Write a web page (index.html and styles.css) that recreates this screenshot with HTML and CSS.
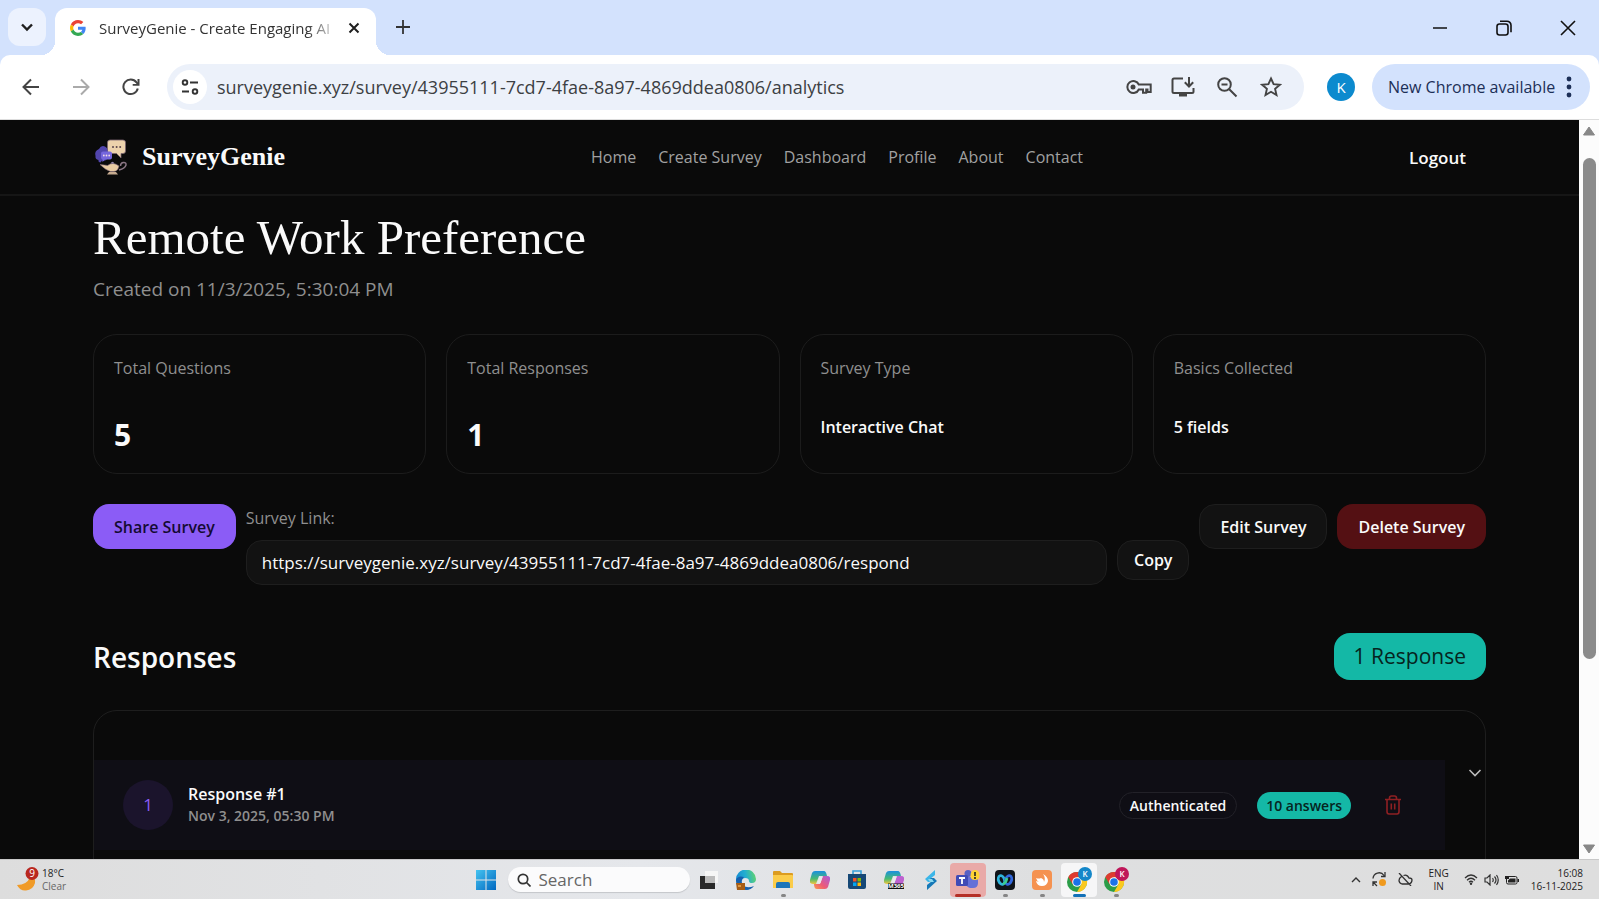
FILE: index.html
```html
<!DOCTYPE html>
<html lang="en">
<head>
<meta charset="utf-8">
<title>SurveyGenie - Create Engaging AI Surveys</title>
<link rel="stylesheet" href="styles.css">
</head>
<body>
<div class="tabstrip">
  <button class="tab-search" aria-label="Search tabs"><svg width="14" height="14" viewBox="0 0 14 14"><path d="M2 4.500l5 5 5-5" fill="none" stroke="#1f1f1f" stroke-width="2.400"/></svg></button>
  <div class="tab">
    <svg class="tab-favicon" width="16" height="16" viewBox="0 0 48 48"><path fill="#ea4335" d="M24 9.500c3.500 0 6.700 1.200 9.200 3.600l6.900-6.900C35.900 2.400 30.500 0 24 0 14.600 0 6.500 5.400 2.600 13.200l8 6.200C12.400 13.700 17.700 9.500 24 9.500z"/><path fill="#4285f4" d="M47 24.600c0-1.600-.2-3.100-.4-4.600H24v9h12.900c-.6 3-2.200 5.500-4.700 7.200l7.700 6C44.400 38 47 31.800 47 24.600z"/><path fill="#fbbc05" d="M10.500 28.600c-.5-1.500-.8-3-.8-4.600s.3-3.100.8-4.600l-8-6.200C.9 16.500 0 20.100 0 24s.9 7.500 2.600 10.800z"/><path fill="#34a853" d="M24 48c6.500 0 11.900-2.100 15.900-5.800l-7.700-6c-2.200 1.500-4.900 2.300-8.200 2.300-6.300 0-11.600-4.200-13.500-9.900l-8 6.200C6.500 42.600 14.600 48 24 48z"/></svg>
    <span class="tab-title">SurveyGenie - Create Engaging AI</span>
    <button class="icon-btn tab-close" aria-label="Close tab"><svg width="12" height="12" viewBox="0 0 12 12"><path d="M1.500 1.500l9 9m0-9l-9 9" stroke="#1f1f1f" stroke-width="2"/></svg></button>
  </div>
  <button class="icon-btn new-tab" aria-label="New tab"><svg width="14" height="14" viewBox="0 0 14 14"><path d="M7 0v14M0 7h14" stroke="#333" stroke-width="1.800"/></svg></button>
  <div class="window-controls">
    <button class="icon-btn" aria-label="Minimize"><svg width="16" height="16" viewBox="0 0 16 16"><path d="M1 8h14" stroke="#111" stroke-width="1.500"/></svg></button>
    <button class="icon-btn" aria-label="Restore"><svg width="16" height="16" viewBox="0 0 16 16"><g fill="none" stroke="#111" stroke-width="1.600"><rect x="1" y="4" width="11" height="11" rx="2.500"/><path d="M4 1.200h7a4 4 0 0 1 4 4v7"/></g></svg></button>
    <button class="icon-btn" aria-label="Close"><svg width="16" height="16" viewBox="0 0 16 16"><path d="M1 1l14 14M15 1L1 15" stroke="#111" stroke-width="1.600"/></svg></button>
  </div>
</div>

<div class="toolbar">
  <div class="nav-buttons">
    <button class="icon-btn" aria-label="Back"><svg width="18" height="18" viewBox="0 0 18 18"><path d="M17 9H2M9 1.500L1.500 9 9 16.500" fill="none" stroke="#444" stroke-width="2"/></svg></button>
    <button class="icon-btn" aria-label="Forward"><svg width="18" height="18" viewBox="0 0 18 18"><path d="M1 9h15M9 1.500L16.500 9 9 16.500" fill="none" stroke="#aaa" stroke-width="2"/></svg></button>
    <button class="icon-btn" aria-label="Reload"><svg width="18" height="18" viewBox="0 0 18 18"><path d="M15.800 10.500A7.300 7.300 0 1 1 14.500 4.300L16 6" fill="none" stroke="#444" stroke-width="2"/><path d="M17.500 1v6.800h-6.800V6h4.800V1z" fill="#444"/></svg></button>
  </div>
  <div class="omnibox">
    <button class="site-info" aria-label="Site information"><svg width="18" height="18" viewBox="0 0 18 18"><g fill="none" stroke="#333" stroke-width="1.900"><circle cx="4" cy="4.500" r="2.300"/><path d="M9 4.500h8M1 13.500h7"/><circle cx="14" cy="13.500" r="2.300"/></g></svg></button>
    <input class="address" type="text" aria-label="Address" value="surveygenie.xyz/survey/43955111-7cd7-4fae-8a97-4869ddea0806/analytics">
    <div class="omni-actions">
      <button class="icon-btn" aria-label="Passwords"><svg width="26" height="16" viewBox="0 0 26 16"><g fill="none" stroke="#444" stroke-width="2"><path d="M12.800 5.500A6 6 0 1 0 12.800 10.500H17V13.800h3.200V10.500H21.500V13h3.200V5.500z"/></g><circle cx="7" cy="8" r="2.500" fill="#444"/></svg></button>
      <button class="icon-btn" aria-label="Install app"><svg width="24" height="22" viewBox="0 0 24 22"><path d="M12 2.500H3q-1.500 0-1.500 1.500v11.500Q1.500 17 3 17h18q1.500 0 1.500-1.500V12M18 1v9M13.800 6.300L18 10.500l4.200-4.200" fill="none" stroke="#444" stroke-width="2"/><path d="M8 17h8v3.500H8z" fill="#444"/></svg></button>
      <button class="icon-btn" aria-label="Zoom"><svg width="22" height="22" viewBox="0 0 22 22"><g fill="none" stroke="#444" stroke-width="2"><circle cx="8.500" cy="8.500" r="6.300"/><path d="M13 13l7.500 7.500M5.500 8.500h6"/></g></svg></button>
      <button class="icon-btn" aria-label="Bookmark"><svg width="22" height="22" viewBox="0 0 22 22"><path d="M11 2.500l2.600 5.700 6.200.6-4.700 4.100 1.400 6.100L11 15.800 5.500 19l1.400-6.100-4.700-4.100 6.200-.6z" fill="none" stroke="#444" stroke-width="1.900"/></svg></button>
    </div>
  </div>
  <button class="avatar" aria-label="Profile">K</button>
  <button class="update">New Chrome available <svg width="6" height="22" viewBox="0 0 6 22"><g fill="#1c2f57"><circle cx="3" cy="3" r="2.400"/><circle cx="3" cy="11" r="2.400"/><circle cx="3" cy="19" r="2.400"/></g></svg></button>
</div>

<div class="viewport">
  <div class="page">
    <header class="site-header">
      <a class="brand" href="#">
        <svg width="35" height="36" viewBox="0 0 35 36"><path d="M17 1h13q2.500 0 2.500 2.500v8.500q0 2.500-2.500 2.500h-2v4.500l-4.500-4.500H17q-2.500 0-2.500-2.500V3.500Q14.500 1 17 1z" fill="#ecd2ac" stroke="#7a6370" stroke-width=".8"/><g fill="#59454c"><circle cx="20" cy="8" r="1"/><circle cx="23.600" cy="8" r="1"/><circle cx="27.200" cy="8" r="1"/></g><path d="M6 10q2-4 6-2.500 2.500 1 2.500 4v8q-2 3-5.500 2l-1.500 2q-2.500-.5-2-2.500Q2 20.500 2.500 17 1 12 6 10z" fill="#5145ad"/><path d="M10 12.500h7q2 0 2 2v4q0 2-2 2h-5l-2.500 2.500v-2.500q-1.500-.5-1.500-2v-4q0-2 2-2z" fill="#7566dc"/><g fill="#f1d9e6"><circle cx="10.800" cy="16.500" r=".9"/><circle cx="13.500" cy="16.500" r=".9"/><circle cx="16.200" cy="16.500" r=".9"/></g><path d="M7 25.500q5 .5 7.500 1Q17 24.500 20 24.500t6 2.500q-1 5-5 5.500h-3.500Q12.500 31 7 25.500z" fill="#e8cba2" stroke="#806779" stroke-width=".6"/><path d="M26 31q6-1.500 7-5 .3-2.700-2.500-2.500-3 .2-3 3.500" fill="none" stroke="#8a7584" stroke-width="1.500"/><path d="M17.500 24.500q2-3.500 4 0z" fill="#9184a8"/><path d="M16 33h7l2 2.500H14z" fill="#c7ab90"/></svg>
        <span>SurveyGenie</span>
      </a>
      <nav class="site-nav">
        <a href="#">Home</a><a href="#">Create Survey</a><a href="#">Dashboard</a><a href="#">Profile</a><a href="#">About</a><a href="#">Contact</a>
      </nav>
      <button class="logout">Logout</button>
    </header>
    <main class="content">
      <h1 class="title">Remote Work Preference</h1>
      <p class="created">Created on 11/3/2025, 5:30:04 PM</p>
      <section class="stats">
        <div class="stat"><span class="stat-label">Total Questions</span><strong class="stat-number">5</strong></div>
        <div class="stat"><span class="stat-label">Total Responses</span><strong class="stat-number">1</strong></div>
        <div class="stat"><span class="stat-label">Survey Type</span><strong class="stat-text">Interactive Chat</strong></div>
        <div class="stat"><span class="stat-label">Basics Collected</span><strong class="stat-text">5 fields</strong></div>
      </section>
      <section class="actions">
        <button class="btn btn-primary">Share Survey</button>
        <div class="share-link">
          <label class="link-label" for="survey-link">Survey Link:</label>
          <div class="link-row">
            <input class="link-input" id="survey-link" type="text" readonly value="https://surveygenie.xyz/survey/43955111-7cd7-4fae-8a97-4869ddea0806/respond">
            <button class="btn btn-dark btn-copy">Copy</button>
          </div>
        </div>
        <button class="btn btn-dark">Edit Survey</button>
        <button class="btn btn-danger">Delete Survey</button>
      </section>
      <div class="responses-head">
        <h2 class="section-title">Responses</h2>
        <span class="count">1 Response</span>
      </div>
      <section class="responses">
        <div class="response">
          <div class="response-main">
            <span class="index">1</span>
            <div class="who"><span class="name">Response #1</span><span class="date">Nov 3, 2025, 05:30 PM</span></div>
            <span class="badge badge-outline">Authenticated</span>
            <span class="badge badge-teal">10 answers</span>
            <button class="icon-btn trash" aria-label="Delete response"><svg width="16" height="20" viewBox="0 0 16 20"><path d="M0 4.500h16M2 4.500v12Q2 19 4 19h8q2 0 2-2.500v-12M4.500 4.500V3q0-2 2-2h3q2 0 2 2v1.500M6.300 8.500v6M9.700 8.500v6" fill="none" stroke="#8f2023" stroke-width="1.600"/></svg></button>
          </div>
          <button class="icon-btn expand" aria-label="Expand response"><svg width="14" height="10" viewBox="0 0 14 10"><path d="M1.500 2L7 7.500 12.500 2" fill="none" stroke="#bbb" stroke-width="1.600"/></svg></button>
        </div>
      </section>
    </main>
  </div>
  <div class="scrollbar">
    <svg width="14" height="10" viewBox="0 0 14 10"><path d="M7 1l5.500 8h-11z" fill="#888" stroke="#888" stroke-linejoin="round"/></svg>
    <div class="track"><div class="thumb"></div></div>
    <svg width="14" height="10" viewBox="0 0 14 10"><path d="M7 9l5.500-8h-11z" fill="#888" stroke="#888" stroke-linejoin="round"/></svg>
  </div>
</div>

<footer class="taskbar">
  <div class="weather">
    <svg width="22" height="26" viewBox="0 0 22 26"><path d="M0 18q10 0 13-8 6 0 5 6-2 7-9 7.500Q3 24 0 18z" fill="#f09b28"/><circle cx="15" cy="6.500" r="6.500" fill="#b9271f"/><text x="15" y="10" text-anchor="middle" class="badge-digit">9</text></svg>
    <span>18°C<br><span class="muted">Clear</span></span>
  </div>
  <div class="apps">
    <button class="app start" aria-label="Start"><svg width="20" height="20" viewBox="0 0 20 20"><defs><linearGradient id="win" x1="0" y1="0" x2="1" y2="1"><stop stop-color="#45c3f0"/><stop offset="1" stop-color="#0067c0"/></linearGradient></defs><path d="M0 0h9.500v9.500H0zM10.500 0H20v9.500h-9.500zM0 10.500h9.500V20H0zM10.500 10.500H20V20h-9.500z" fill="url(#win)"/></svg></button>
    <label class="search"><svg width="14" height="14" viewBox="0 0 14 14"><g fill="none" stroke="#333" stroke-width="1.700"><circle cx="6" cy="6" r="4.700"/><path d="M9.500 9.500l4 4"/></g></svg><input type="text" placeholder="Search" aria-label="Search"></label>
    <button class="app" aria-label="Task view"><svg width="20" height="20" viewBox="0 0 20 20"><path d="M6 1h13v12H6z" fill="#f6f6f6"/><path d="M1 6h15v13H1z" fill="#292929"/><path d="M6 6h10v7H6z" fill="#bbb"/></svg></button>
    <button class="app" aria-label="Edge"><svg width="20" height="20" viewBox="0 0 20 20"><defs><linearGradient id="edge" x1="0" y1="0.500" x2="1" y2="0.300"><stop stop-color="#1689d3"/><stop offset=".5" stop-color="#22aed0"/><stop offset="1" stop-color="#61d36f"/></linearGradient></defs><path d="M0 10A10 10 0 0 1 20 9q0 4-4 4-3 0-3-2 0-3-4-3-5 1-4 6 2 4 8 5.500Q0 21 0 10z" fill="url(#edge)"/><path d="M0 10q2-5 8-3-4 4-1 8 4 4 11 1-3 4-8 4Q0 19 0 10z" fill="#155fae"/><path d="M0 13h9v7H1z" fill="#a65c14"/><path d="M2 15h3v2H2z" fill="#dc9740"/></svg></button>
    <button class="app running" aria-label="File Explorer"><svg width="20" height="20" viewBox="0 0 20 20"><path d="M0 2q0-1 1-1h6l2 2h10q1 0 1 1v6H0z" fill="#dc9c20"/><path d="M0 5h19q1 0 1 1v12H0z" fill="#fbcc4a"/><path d="M3 18v-4q0-2 2-2h10q2 0 2 2v4z" fill="#1d75b9"/></svg></button>
    <button class="app" aria-label="Copilot"><svg width="20" height="20" viewBox="0 0 20 20"><defs><linearGradient id="cpa" x1="0" y1="0" x2="0" y2="1"><stop stop-color="#1a8fe0"/><stop offset=".6" stop-color="#48bb72"/><stop offset="1" stop-color="#f2c53d"/></linearGradient><linearGradient id="cpb" x1="1" y1="0" x2="0" y2="1"><stop stop-color="#a95cde"/><stop offset=".6" stop-color="#ee5b77"/><stop offset="1" stop-color="#fa9a4b"/></linearGradient></defs><path d="M5 1h9q2 0 3 5h-5l-3 0-3 8H3q-4 0-3-4l2-7q1-2 3-2z" fill="url(#cpa)"/><path d="M15 19H7q-3 0-3-5h6l3-8h4q4 0 3 4l-2 7q-1 2-3 2z" fill="url(#cpb)"/><path d="M9.500 7h3L10.500 13h-3z" fill="#e8eaec"/></svg></button>
    <button class="app" aria-label="Store"><svg width="20" height="20" viewBox="0 0 20 20"><path d="M6 5V1h8v4" fill="none" stroke="#36a0db" stroke-width="1.600"/><path d="M1 4h18v13q0 2-2 2H3q-2 0-2-2z" fill="#164876"/><path d="M6 8h3.500v3.500H6z" fill="#f35325"/><path d="M10.500 8H14v3.500h-3.500z" fill="#81bc06"/><path d="M6 12.500h3.500V16H6z" fill="#05a6f0"/><path d="M10.500 12.500H14V16h-3.500z" fill="#ffba08"/></svg></button>
    <button class="app" aria-label="Microsoft 365 Copilot"><svg width="20" height="20" viewBox="0 0 20 20"><path d="M5 1h9q2 0 3 5h-5l-3 0-3 8H3q-4 0-3-4l2-7q1-2 3-2z" fill="url(#cpa)"/><path d="M15 17H7l3-3 3-8h4q4 0 3 4l-2 6z" fill="#bd62d0"/><path d="M9.500 7h3L10.500 13h-3z" fill="#e8eaec"/><path d="M4 13.500h16V19H4z" fill="#111"/><text x="12" y="18" text-anchor="middle" class="m365">M365</text></svg></button>
    <button class="app" aria-label="Power Automate"><svg width="20" height="20" viewBox="0 0 20 20"><path d="M14 0L4 9l3 3h4l-2-3 5-4z" fill="#3cb6e8"/><path d="M6 20l10-9-3-3H9l2 3-5 4z" fill="#1679b8"/><path d="M7 9h4l2 3H9z" fill="#8bd9ef"/></svg></button>
    <button class="app alert" aria-label="Teams"><svg width="24" height="20" viewBox="0 0 24 20"><circle cx="12" cy="3.500" r="3.500" fill="#5860c5"/><path d="M10 7h12v6q0 5-5 5h-3q-4-1-4-5z" fill="#6670d7"/><rect y="5" width="12" height="11" rx="1.500" fill="#424bb6"/><path d="M3 8h6M6 8v6" stroke="#fff" stroke-width="1.800"/><path d="M19 0q4 0 4.500 5t-4.500 5-4.500-5T19 0z" fill="#ffd335"/><path d="M19 2v4M19 7v2" stroke="#222" stroke-width="1.600"/></svg></button>
    <button class="app running" aria-label="Webex"><svg width="20" height="20" viewBox="0 0 20 20"><rect width="20" height="20" rx="4" fill="#101419"/><g fill="none" stroke-width="2.800"><ellipse cx="6.500" cy="10" rx="3" ry="4.500" stroke="#2fb5dc" transform="rotate(-20 6.500 10)"/><ellipse cx="13.500" cy="10" rx="3" ry="4.500" stroke="#3268dd" transform="rotate(20 13.500 10)"/><path d="M8 13q2 2 4-5" stroke="#3bcf8f"/></g></svg></button>
    <button class="app running" aria-label="Swift"><svg width="20" height="20" viewBox="0 0 20 20"><rect width="20" height="20" rx="4" fill="#f59250"/><path d="M4 8q3 1 5 0 3 1 3 4 2-4-1-8 5 3 5 7-1 5-6 5-5 0-6-5l3 1q-2-1-3-4z" fill="#fff"/></svg></button>
    <button class="app active" aria-label="Chrome K"><svg width="26" height="26" viewBox="0 0 26 26"><circle cx="11" cy="15" r="10" fill="#2b9d48"/><path d="M2.300 10A10 10 0 0 1 19.700 10H11l-4.300 7.500z" fill="#de3b30"/><path d="M19.700 10A10 10 0 0 1 11 25l4.300-7.500L11 10z" fill="#fbc91f"/><circle cx="11" cy="15" r="4.800" fill="#fff"/><circle cx="11" cy="15" r="3.800" fill="#1a73e8"/><circle cx="19" cy="7" r="7" fill="#1487c9"/><text x="19" y="10" text-anchor="middle" class="k">K</text></svg></button>
    <button class="app running" aria-label="Chrome K second profile"><svg width="26" height="26" viewBox="0 0 26 26"><circle cx="11" cy="15" r="10" fill="#2b9d48"/><path d="M2.300 10A10 10 0 0 1 19.700 10H11l-4.300 7.500z" fill="#de3b30"/><path d="M19.700 10A10 10 0 0 1 11 25l4.300-7.500L11 10z" fill="#fbc91f"/><circle cx="11" cy="15" r="4.800" fill="#fff"/><circle cx="11" cy="15" r="3.800" fill="#1a73e8"/><circle cx="19" cy="7" r="7" fill="#bf1659"/><text x="19" y="10" text-anchor="middle" class="k">K</text></svg></button>
  </div>
  <div class="tray">
    <svg width="10" height="7" viewBox="0 0 10 7"><path d="M1 6l4-4 4 4" fill="none" stroke="#333" stroke-width="1.400"/></svg>
    <svg width="15" height="15" viewBox="0 0 15 15"><path d="M1 6.500a6 6 0 0 1 11-3M13 0v4.500H9M1 14v-4h4M1.500 10.500L5 14" fill="none" stroke="#333" stroke-width="1.300"/><circle cx="10.500" cy="10.500" r="3.500" fill="#f09a1e"/></svg>
    <svg width="15" height="13" viewBox="0 0 15 13"><path d="M4 3Q1 5 1 7.500T4 11h7q3-1 3-4 0-2-3-2Q9 1 5.500 2.500M1 0l12 13" fill="none" stroke="#333" stroke-width="1.300"/></svg>
    <span class="lang">ENG<br>IN</span>
    <svg width="14" height="11" viewBox="0 0 14 11"><path d="M1 4q6-6 12 0M3 6.300q4-4 8 0M5 8.300q2-2 4 0" fill="none" stroke="#333" stroke-width="1.300"/><circle cx="7" cy="9.700" r="1.200" fill="#333"/></svg>
    <svg width="15" height="12" viewBox="0 0 15 12"><path d="M1 4h2l3-3v10L3 8H1zM8.500 4q1.500 2 0 4M10.500 2.500q3 3.500 0 7M12.500 1q3.500 5 0 10" fill="none" stroke="#333" stroke-width="1.200"/></svg>
    <svg width="14" height="11" viewBox="0 0 14 11"><rect x="1.500" y="2.500" width="10.500" height="7.500" rx="1.500" fill="none" stroke="#222"/><path d="M5 4.500h5.500v4H3v-2zM12.500 5H14v3h-1.500zM0 2h4v3H0zM1 0v3M3.500 0v3" fill="#222"/></svg>
    <span class="clock">16:08<br>16-11-2025</span>
  </div>
</footer>
</body>
</html>
```
FILE: styles.css
```css
* { box-sizing: border-box; }
body {
  margin: 0;
  height: 100vh;
  display: flex;
  flex-direction: column;
  overflow: hidden;
  background: #d3e2fd;
  font-family: "Open Sans", "Noto Sans", sans-serif;
}
button, input { font: inherit; color: inherit; }
button { margin: 0; padding: 0; border: 0; background: none; white-space: nowrap; }
a { color: inherit; text-decoration: none; }
svg { display: block; flex: none; }
.icon-btn { display: grid; place-items: center; }

/* Tab strip */
.tabstrip { display: flex; height: 55px; flex: none; padding: 8px 11px 0 8px; }
.tab-search { width: 38px; height: 38px; border-radius: 12px; background: #ecf2fe; display: grid; place-items: center; }
.tab {
  position: relative;
  display: flex;
  align-items: center;
  width: 321px;
  height: 47px;
  margin-left: 9px;
  padding: 0 14px 8px 15px;
  border-radius: 12px 12px 0 0;
  background: #fff;
  color: #333;
  font-size: 15px;
}
.tab::before, .tab::after {
  content: "";
  position: absolute;
  bottom: 0;
  width: 14px;
  height: 14px;
}
.tab::before { right: 100%; background: radial-gradient(circle at 0 0, transparent 14px, #fff 14px); }
.tab::after { left: 100%; background: radial-gradient(circle at 100% 0, transparent 14px, #fff 14px); }
.tab-title {
  flex: 1;
  margin: 0 6px 0 13px;
  white-space: nowrap;
  -webkit-mask-image: linear-gradient(90deg, #000 86%, transparent);
  mask-image: linear-gradient(90deg, #000 86%, transparent);
}
.tab-close { width: 16px; height: 16px; }
.new-tab { width: 38px; height: 38px; margin-left: 8px; }
.window-controls { display: flex; margin-left: auto; }
.window-controls .icon-btn { width: 40px; height: 40px; margin-left: 24px; }

/* Toolbar */
.toolbar {
  display: flex;
  align-items: center;
  height: 65px;
  flex: none;
  padding: 0 9px 0 13px;
  border-bottom: 1px solid #ddd;
  border-radius: 10px 10px 0 0;
  background: #fff;
}
.nav-buttons { display: flex; gap: 14px; }
.nav-buttons .icon-btn { width: 36px; height: 36px; }
.omnibox {
  display: flex;
  align-items: center;
  flex: 1;
  height: 46px;
  margin-left: 18px;
  padding: 0 20px 0 6px;
  border-radius: 23px;
  background: #ecf1fa;
}
.site-info { width: 34px; height: 34px; flex: none; border-radius: 50%; background: #fff; display: grid; place-items: center; }
.address { flex: 1; min-width: 0; margin-left: 10px; padding: 0; border: 0; outline: 0; background: none; color: #3c4043; font-size: 18px; }
.omni-actions { display: flex; gap: 18px; }
.omni-actions .icon-btn { width: 26px; height: 26px; }
.avatar { width: 28px; height: 28px; margin-left: 23px; border-radius: 50%; background: #0c8ace; color: #fff; font-size: 15px; }
.update {
  display: flex;
  align-items: center;
  justify-content: space-between;
  width: 218px;
  height: 46px;
  margin-left: 17px;
  padding: 0 18px 0 16px;
  border-radius: 23px;
  background: #d3e2fd;
  color: #1c2f57;
  font-size: 16px;
}

/* Page */
.viewport { display: flex; flex: 1; min-height: 0; }
.page { flex: 1; min-width: 0; overflow: hidden; background: #0a0a0a; color: #fafafa; }
.site-header {
  display: flex;
  align-items: center;
  justify-content: space-between;
  height: 76px;
  padding: 0 93px;
  border-bottom: 2px solid #161616;
}
.brand { display: flex; align-items: center; gap: 14px; font-family: "Liberation Serif", serif; font-size: 26px; font-weight: 700; }
.site-nav { display: flex; gap: 22px; color: #a1a1a1; font-size: 16px; }
.logout { padding: 8px 20px; font-size: 17px; font-weight: 600; }
.content { padding: 0 93px; }
.title { margin: 14px 0 0; font-family: "Liberation Serif", serif; font-size: 49px; font-weight: 400; line-height: 56px; }
.created { margin: 9px 0 0; color: #8f8f8f; font-size: 19px; line-height: 28px; }
.stats { display: grid; grid-template-columns: repeat(4, 1fr); gap: 20px; margin-top: 31px; }
.stat { display: flex; flex-direction: column; height: 140px; padding: 20px; border: 1px solid #1c1c1c; border-radius: 24px; }
.stat-label { color: #8f8f8f; font-size: 16px; line-height: 26px; }
.stat-number { margin-top: 32px; font-size: 30px; line-height: 44px; font-weight: 700; }
.stat-text { margin-top: 32px; font-size: 16px; line-height: 28px; font-weight: 600; }
.actions { display: flex; align-items: flex-start; gap: 10px; margin-top: 30px; }
.btn { height: 45px; padding: 0 20px; border: 1px solid transparent; border-radius: 16px; font-size: 16px; font-weight: 600; }
.btn-primary { background: #8b5cf6; color: #140a33; }
.btn-dark { border-color: #1e1e1e; background: #121212; }
.btn-danger { background: #541013; }
.btn-copy { height: 40px; padding: 0 16px; }
.share-link { flex: 1; min-width: 0; }
.link-label { display: block; color: #8f8f8f; font-size: 16px; line-height: 28px; }
.link-row { display: flex; align-items: flex-start; gap: 10px; margin-top: 8px; }
.link-input { flex: 1; min-width: 0; height: 45px; padding: 0 15px; border: 1px solid #1e1e1e; border-radius: 16px; background: #121212; color: #fafafa; font-size: 17px; }
.responses-head { display: flex; align-items: center; justify-content: space-between; margin-top: 48px; }
.section-title { margin: 0; font-size: 28px; font-weight: 600; }
.count { padding: 0 20px; border-radius: 16px; background: #14b8a6; color: #062420; font-size: 21px; font-weight: 500; line-height: 47px; }
.responses { height: 300px; margin-top: 30px; padding-top: 49px; border: 1px solid #1e1e1e; border-radius: 24px; }
.response { display: flex; }
.response-main { display: flex; align-items: center; flex: 1; height: 90px; padding: 0 38px 0 29px; background: #0f0e15; }
.index { width: 50px; height: 50px; border-radius: 50%; background: #1b142c; color: #8b5cf6; font-size: 17px; line-height: 50px; text-align: center; }
.who { display: flex; flex-direction: column; margin: 0 auto 0 15px; font-weight: 600; }
.name { font-size: 16px; line-height: 22px; }
.date { color: #8f8f8f; font-size: 14px; line-height: 22px; }
.badge { margin-left: 20px; padding: 0 10px; border: 1px solid transparent; border-radius: 14px; font-size: 14px; font-weight: 600; line-height: 25px; }
.badge-outline { border-color: #222128; }
.badge-teal { padding: 0 8px; background: #14b8a6; color: #062420; }
.trash { width: 28px; height: 28px; margin-left: 28px; }
.expand { width: 14px; height: 14px; margin: 6px 3px 0 23px; }
.scrollbar { display: flex; flex-direction: column; align-items: center; width: 20px; padding: 6px 0 5px; background: #fcfcfc; }
.track { flex: 1; padding-top: 22px; }
.thumb { width: 13px; height: 73%; border-radius: 7px; background: #8b8b8b; }

/* Taskbar */
.taskbar {
  display: grid;
  grid-template-columns: 1fr auto 1fr;
  height: 40px;
  flex: none;
  border-top: 1px solid #c8c8c8;
  background: linear-gradient(90deg, #dddddd, #e5e7eb 40%, #dedfe0 65%, #dedede);
  color: #222;
  font-size: 10px;
  line-height: 13px;
}
.weather { display: flex; align-items: center; gap: 3px; padding-left: 17px; }
.muted { color: #666; }
.badge-digit { fill: #fff; font-size: 10px; }
.apps { display: flex; align-items: center; gap: 1px; }
.app { position: relative; width: 36px; height: 34px; border-radius: 4px; display: grid; place-items: center; }
.start { margin-left: 2px; }
.search { display: flex; align-items: center; gap: 8px; width: 182px; height: 25px; margin: 0 0 0 3px; padding: 0 9px; border-radius: 13px; background: #fbfbfc; box-shadow: 0 1px 1px #c4c6ca; }
.search input { width: 100%; padding: 0; border: 0; background: none; font-size: 17px; }
.search input::placeholder { color: #666; opacity: 1; }
.alert { background: #e9aaa8; }
.active { background: #f6f6f7; }
.running::after, .active::after, .alert::after { content: ""; position: absolute; bottom: 0; left: 50%; width: 5px; height: 3px; margin-left: -2px; border-radius: 2px; background: #858585; }
.active::after { width: 13px; margin-left: -6px; background: #1371b8; }
.alert::after { width: 26px; margin-left: -13px; background: #b52f26; }
.m365 { fill: #fff; font-size: 6px; font-weight: 700; }
.k { fill: #fff; font-size: 8px; font-weight: 600; }
.tray { display: flex; align-items: center; justify-content: flex-end; gap: 6px; padding-right: 16px; }
.tray svg:first-child, .tray svg:nth-child(2) { margin-right: 5px; }
.lang { margin: 0 9px; text-align: center; }
.clock { margin-left: 6px; text-align: right; }
```
